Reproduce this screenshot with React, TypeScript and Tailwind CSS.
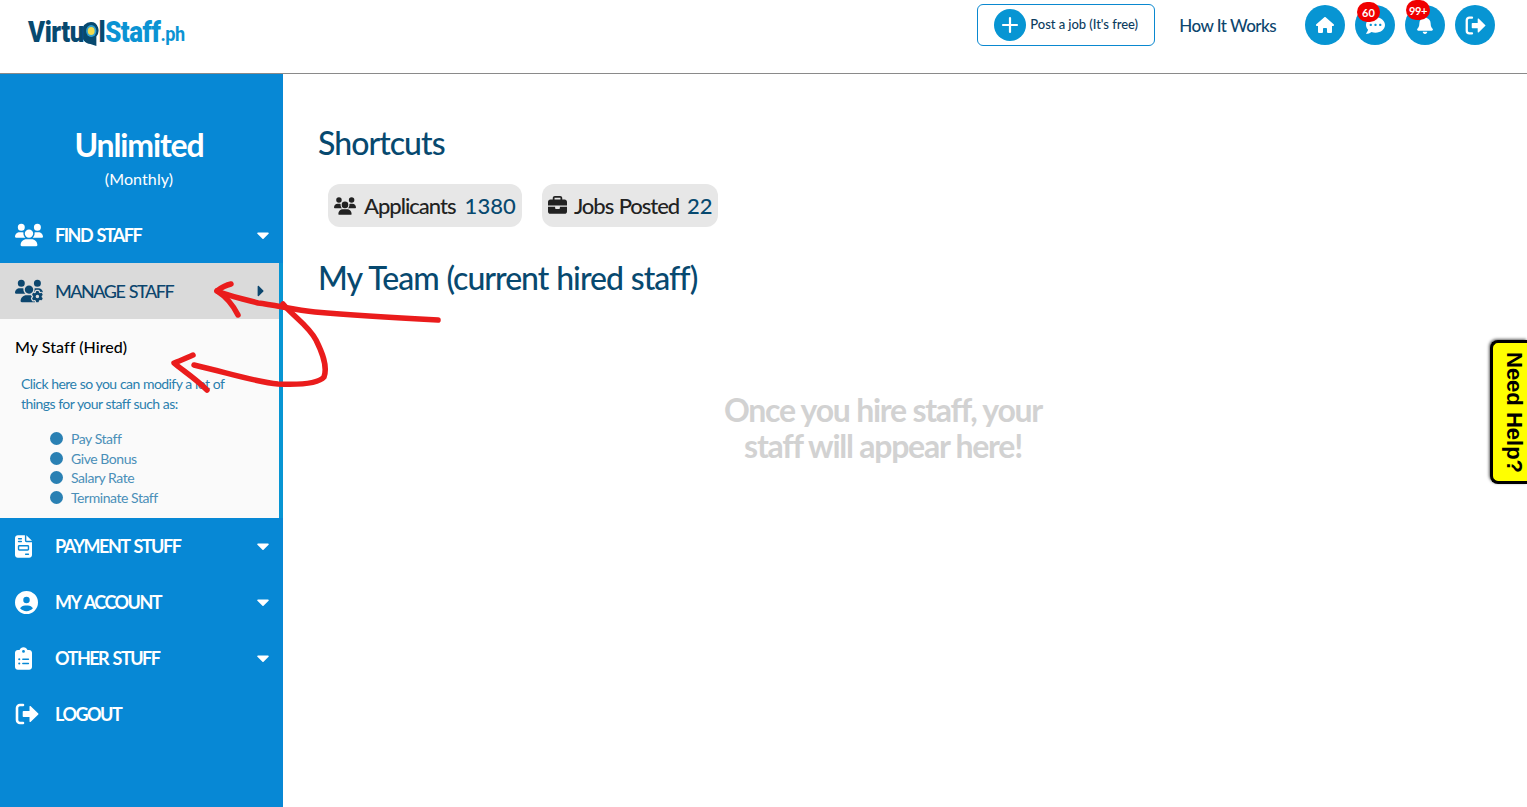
import React from "react";
import { FaCommentDots, FaBell, FaCaretDown, FaCaretRight } from "react-icons/fa";
import { FaUsers, FaUsersGear, FaFileInvoice, FaCircleUser, FaClipboardList, FaHouse, FaBriefcase } from "react-icons/fa6";
import { Plus } from "lucide-react";

function LogoutIcon({ size }: { size: number }) {
  return (
    <svg width={size} height={size} viewBox="0 0 24 24" fill="none">
      <path d="M8 3H5a3 3 0 0 0-3 3v12a3 3 0 0 0 3 3h3" stroke="currentColor" strokeWidth="2.6" strokeLinecap="round" />
      <path d="M8.5 9h6V4.5a.6.6 0 0 1 1-.4l7.8 7.5a.6.6 0 0 1 0 .8l-7.8 7.5a.6.6 0 0 1-1-.4V15h-6a.8.8 0 0 1-.8-.8V9.800a.8.8 0 0 1 .8-.8z" fill="currentColor" />
    </svg>
  );
}

function MenuRow({ icon, label, caret = true }: { icon: React.ReactNode; label: string; caret?: boolean }) {
  return (
    <div className="flex h-14 items-center pl-[15px] pr-[10px] text-white">
      <span className="flex w-[40px] shrink-0 items-center">{icon}</span>
      <span className="flex-1 text-[18px] leading-none font-bold tracking-[-1.5px] [word-spacing:1.5px]">{label}</span>
      {caret && <FaCaretDown className="text-[20px]" />}
    </div>
  );
}

function RoundIcon({ children, badge }: { children: React.ReactNode; badge?: React.ReactNode }) {
  return (
    <div className="relative flex h-10 w-10 items-center justify-center rounded-full bg-[#0795d3] text-white">
      {children}
      {badge}
    </div>
  );
}

export default function App() {
  return (
    <div className="relative h-[807px] w-[1527px] overflow-hidden bg-white font-['Lato','Carlito',sans-serif]">
      <header className="flex h-[74px] items-start border-b border-[#8a8a8a] bg-white">
        <div className="ml-[28px] mt-[14px] flex origin-left scale-x-[0.86] items-center font-['Roboto',sans-serif] text-[30px] font-black leading-[30px] tracking-[-0.5px]">
          <span className="text-[#07496f]">Virtu</span>
          <svg width="19" height="27" viewBox="0 0 18 27" className="mx-[-1px] mt-[6px]">
            <path d="M9 1a8.5 8.5 0 0 1 6 14.5V25l-7-2A8.5 8.5 0 0 1 9 1z" fill="#07496f" />
            <circle cx="9" cy="10" r="6" fill="#2f9fd0" />
            <circle cx="9" cy="10" r="4" fill="#f4dc4c" />
          </svg>
          <span className="text-[#07496f]">l</span>
          <span className="text-[#0b93d3]">Staff</span>
          <span className="mt-[5px] text-[21px] font-bold text-[#0b93d3]">.ph</span>
        </div>
        <div className="ml-auto mr-[32px] mt-[4px] flex items-start">
          <div className="flex h-[42px] w-[178px] items-center rounded-[6px] border border-[#0a88d0] pl-[16px]">
            <span className="flex h-8 w-8 items-center justify-center rounded-full bg-[#0795d3] text-white">
              <Plus size={24} strokeWidth={2.2} />
            </span>
            <span className="ml-[4px] mt-[-1px] text-[13px] font-medium tracking-[-0.05px] text-[#0c3c5e]">Post a job (It's free)</span>
          </div>
          <span className="ml-[24px] mt-[12px] text-[17px] font-medium leading-[20px] tracking-[-0.55px] text-[#0c466e]">How It Works</span>
          <div className="ml-[29px] mt-[1px] flex gap-[10px]">
            <RoundIcon><FaHouse className="text-[18px]" /></RoundIcon>
            <RoundIcon badge={
              <span className="absolute -top-[3px] left-[2px] flex h-[20px] w-[23px] items-center justify-center rounded-full bg-[#f00000] text-[11px] font-bold leading-none text-white">60</span>
            }><FaCommentDots className="text-[19px]" /></RoundIcon>
            <RoundIcon badge={
              <span className="absolute -top-[5px] left-[1px] flex h-[20px] w-[24px] items-center justify-center rounded-full bg-[#f00000] text-[11px] font-bold leading-none tracking-[-0.3px] text-white">99+</span>
            }><FaBell className="text-[18px]" /></RoundIcon>
            <RoundIcon><LogoutIcon size={21} /></RoundIcon>
          </div>
        </div>
      </header>

      <div className="flex h-[733px]">
        <aside className="w-[283px] shrink-0 bg-[#0788d5]">
          <div className="flex h-[133px] flex-col items-center pr-[5px] pt-[52px] text-white">
            <span className="text-[32px] font-bold leading-[38px] tracking-[-1.15px]">Unlimited</span>
            <span className="mt-[5px] text-[16px] leading-[20px] tracking-[0.1px]">(Monthly)</span>
          </div>
          <MenuRow icon={<FaUsers className="text-[28px]" />} label="FIND STAFF" />
          <div className="border-r-4 border-[#0795d3]">
            <div className="flex h-14 items-center bg-[#dadada] pl-[15px] pr-[9px] text-[#0c466e]">
              <span className="flex w-[40px] shrink-0 items-center"><FaUsersGear className="text-[28px]" /></span>
              <span className="flex-1 text-[18px] font-medium leading-none tracking-[-1.5px] [word-spacing:1.5px]">MANAGE STAFF</span>
              <FaCaretRight className="text-[18px]" />
            </div>
            <div className="h-[199px] bg-[#fafafa] pl-[15px]">
              <div className="pt-[18px] text-[16px] font-medium leading-[20px] tracking-[0.05px] text-black">My Staff (Hired)</div>
              <p className="ml-[6px] mt-[17px] text-[14px] leading-[20px] tracking-[-0.57px] [word-spacing:0.3px] text-[#2a7fae]">
                Click here so you can modify a lot of<br />things for your staff such as:
              </p>
              <ul className="ml-[35px] mt-[15px] text-[14px] leading-[19.5px] tracking-[-0.45px] text-[#4a8fb8]">
                {["Pay Staff", "Give Bonus", "Salary Rate", "Terminate Staff"].map((t) => (
                  <li key={t} className="flex items-center">
                    <span className="mr-[8px] h-[13px] w-[13px] rounded-full bg-[#2a80b3]" />
                    {t}
                  </li>
                ))}
              </ul>
            </div>
          </div>
          <MenuRow icon={<FaFileInvoice className="h-[23px] w-[17px]" />} label="PAYMENT STUFF" />
          <MenuRow icon={<FaCircleUser className="text-[23px]" />} label="MY ACCOUNT" />
          <MenuRow icon={<FaClipboardList className="h-[23px] w-[17px]" />} label="OTHER STUFF" />
          <MenuRow icon={<LogoutIcon size={24} />} label="LOGOUT" caret={false} />
        </aside>

        <main className="flex-1 pl-[35px] pt-[49px]">
          <h2 className="text-[32px] font-medium leading-[40px] tracking-[-0.95px] text-[#07496f]">Shortcuts</h2>
          <div className="ml-[10px] mt-[21px] flex gap-[20px]">
            <div className="flex h-[43px] items-center rounded-[12px] bg-[#e7e7e7] px-[6px] text-[22px]">
              <FaUsers className="text-[22px] text-[#222]" />
              <span className="ml-[8px] font-medium tracking-[-1px] text-[#222]">Applicants</span>
              <span className="ml-[9px] font-medium tracking-[0.1px] text-[#07496f]">1380</span>
            </div>
            <div className="flex h-[43px] items-center rounded-[12px] bg-[#e7e7e7] px-[6px] text-[22px]">
              <FaBriefcase className="text-[19px] text-[#222]" />
              <span className="ml-[7px] font-medium tracking-[-1.05px] [word-spacing:1px] text-[#222]">Jobs Posted</span>
              <span className="ml-[8px] font-medium tracking-[-0.1px] text-[#07496f]">22</span>
            </div>
          </div>
          <h2 className="mt-[31px] text-[32px] font-medium leading-[40px] tracking-[-1px] [word-spacing:0.75px] text-[#07496f]">My Team (current hired staff)</h2>
          <div className="mt-[94px] pr-[79px] text-center text-[32px] font-bold leading-[36px] tracking-[-1.25px] text-[#d2d2d2]">
            Once you hire staff, your<br />staff will appear here!
          </div>
        </main>
      </div>

      {/* Need Help tab */}
      <div className="absolute right-0 top-[340px] flex h-[144px] w-[37px] items-center justify-center rounded-l-[8px] border-[3px] border-r-0 border-black bg-[#ffff00] pl-[8px] pt-[2px] shadow-[-1px_-1px_3px_rgba(0,0,0,0.6)]">
        <span className="font-['Liberation_Sans',sans-serif] text-[22px] font-bold leading-none text-black [writing-mode:vertical-rl]">Need Help?</span>
      </div>

      {/* Hand-drawn annotation arrows */}
      <svg className="pointer-events-none absolute left-0 top-0" width="1527" height="807" fill="none" stroke="#ea1c1c" strokeWidth="5.5" strokeLinecap="round" strokeLinejoin="round">
        <path d="M438 320 C400 318 350 315 315 312 C295 310 275 305 258 303 C240 298 228 296 217 291 C222 287 226 285 231 284" />
        <path d="M217 291 C225 296 232 303 238 315" />
        <path d="M283 304 C295 318 308 325 316 340 C322 352 328 366 324 377 C318 384 300 385 278 384 C255 382 225 372 194 365" />
        <path d="M193 355 C186 358 180 361 174 363 C182 370 195 378 207 390" />
      </svg>
    </div>
  );
}
